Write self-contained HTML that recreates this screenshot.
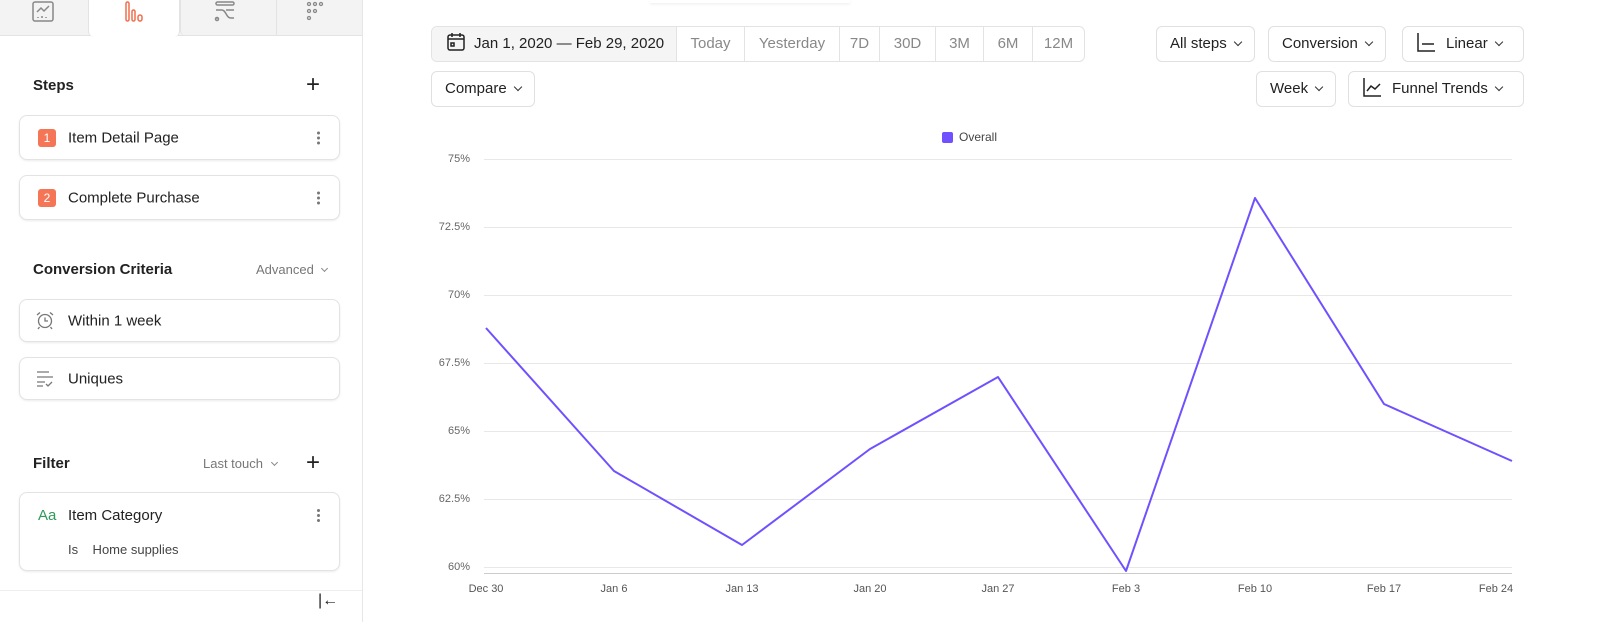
<!DOCTYPE html>
<html><head><meta charset="utf-8"><style>
*{box-sizing:border-box;margin:0;padding:0}
body{width:1600px;height:622px;overflow:hidden;background:#fff;font-family:"Liberation Sans",sans-serif;color:#222;position:relative}
.side{position:absolute;left:0;top:0;width:363px;height:622px;border-right:1px solid #e6e6e6;background:#fff}
.tabs{position:absolute;top:0;left:0;width:362px;height:36px;background:#f3f3f3;border-bottom:1px solid #e3e3e3}
.tab{position:absolute;top:0;height:36px}
.active{left:88px;width:92px;background:#fff;height:37px;border-left:1px solid #e3e3e3;border-right:1px solid #e3e3e3;border-radius:0 0 6px 6px}
.h{position:absolute;font-size:15px;font-weight:bold;color:#222}
.card{position:absolute;left:19px;width:321px;border:1px solid #e3e3e3;border-radius:8px;background:#fff;box-shadow:0 1px 2px rgba(0,0,0,.08);font-size:15px}
.card .t{position:absolute;left:48px;top:50%;transform:translateY(-50%)}
.num{position:absolute;left:18px;top:50%;transform:translateY(-50%);width:18px;height:18px;background:#f57656;color:#fff;font-size:12px;text-align:center;line-height:18px;border-radius:3px}
.dots{position:absolute;right:18px;top:50%;transform:translateY(-50%);width:4px}
.dots i{display:block;width:3px;height:3px;border-radius:50%;background:#777;margin:2px 0}
.plus{position:absolute;font-size:24px;font-weight:300;color:#222;line-height:1}
.gray{position:absolute;font-size:13px;color:#777}
.btn{position:absolute;height:36px;border:1px solid #e0e0e0;border-radius:6px;background:#fff;font-size:15px;line-height:34px;padding:0 13px;color:#222;white-space:nowrap}
.car{display:inline-block;width:6px;height:6px;border-right:1.5px solid #333;border-bottom:1.5px solid #333;transform:rotate(45deg);margin-left:8px;position:relative;top:-3px}
.seg{position:absolute;top:26px;left:431px;height:36px;border:1px solid #e3e3e3;border-radius:6px;display:flex;font-size:15px;overflow:hidden}
.seg div{border-left:1px solid #e3e3e3;color:#888;line-height:34px;text-align:center}
.yl{position:absolute;right:1130px;font-size:11px;color:#666}
.xl{position:absolute;top:583px;font-size:11px;color:#555;transform:translateX(-50%)}
</style></head><body>
<div class="side">
 <div class="tabs">
  <div class="tab active"></div>
  <div class="tab" style="left:180px;width:97px;border-right:1px solid #e3e3e3;border-left:1px solid #e3e3e3;border-radius:0 0 0 6px"></div>
  <svg style="position:absolute;left:32px;top:1px" width="22" height="22" viewBox="0 0 22 22" fill="none" stroke="#888" stroke-width="1.5"><rect x="1" y="1" width="20" height="19" rx="2"/><path d="M5 11l4-4 3 3 5-5"/><path d="M6 16v1M10 15v2M14 16v1" /></svg>
  <svg style="position:absolute;left:124px;top:1px" width="22" height="22" viewBox="0 0 22 22" fill="none" stroke="#f06f4f" stroke-width="1.5"><rect x="2" y="1" width="3" height="19" rx="1.5"/><rect x="8" y="9" width="3" height="11" rx="1.5"/><rect x="14" y="14" width="4" height="6" rx="2"/></svg>
  <svg style="position:absolute;left:214px;top:1px" width="22" height="22" viewBox="0 0 22 22" fill="none" stroke="#888" stroke-width="1.5"><rect x="2" y="1" width="18" height="3" rx="1.5"/><path d="M2 9h6c4 0 4 8 9 8h3M2 17h2M12 9h8"/><circle cx="3" cy="18" r="1.5"/></svg>
  <svg style="position:absolute;left:305px;top:1px" width="22" height="22" viewBox="0 0 22 22" fill="none" stroke="#888" stroke-width="1.3"><circle cx="4" cy="3" r="1.5"/><circle cx="10" cy="3" r="1.5"/><circle cx="16" cy="3" r="1.5"/><circle cx="4" cy="10" r="1.5"/><circle cx="10" cy="10" r="1.5"/><circle cx="4" cy="17" r="1.5"/></svg>
 </div>
 <div class="h" style="left:33px;top:77px">Steps</div>
 <div class="plus" style="left:306px;top:73px">+</div>
 <div class="card" style="top:115px;height:45px"><div class="num">1</div><div class="t">Item Detail Page</div><div class="dots"><i></i><i></i><i></i></div></div>
 <div class="card" style="top:175px;height:45px"><div class="num">2</div><div class="t">Complete Purchase</div><div class="dots"><i></i><i></i><i></i></div></div>
 <div class="h" style="left:33px;top:261px">Conversion Criteria</div>
 <div class="gray" style="left:256px;top:262px">Advanced <span class="car" style="border-color:#888;width:5px;height:5px;margin-left:5px"></span></div>
 <div class="card" style="top:299px;height:43px"><svg style="position:absolute;left:15px;top:11px" width="20" height="20" viewBox="0 0 20 20" fill="none" stroke="#777" stroke-width="1.3"><circle cx="10" cy="10" r="6.5"/><path d="M10 6.5V10h3M2 4l3-2.5M18 4l-3-2.5M4.5 16L3 18M15.5 16L17 18"/></svg><div class="t">Within 1 week</div></div>
 <div class="card" style="top:357px;height:43px"><svg style="position:absolute;left:16px;top:12px" width="20" height="18" viewBox="0 0 20 18" fill="none" stroke="#777" stroke-width="1.3"><path d="M1 2h12M1 7h16M1 12h8M1 16h6M10 14l2 2 4-4"/></svg><div class="t">Uniques</div></div>
 <div class="h" style="left:33px;top:455px">Filter</div>
 <div class="gray" style="left:203px;top:456px">Last touch <span class="car" style="border-color:#888;width:5px;height:5px;margin-left:5px"></span></div>
 <div class="plus" style="left:306px;top:451px">+</div>
 <div class="card" style="top:492px;height:79px"><div style="position:absolute;left:18px;top:14px;color:#2e9a5a;font-size:15px">Aa</div><div style="position:absolute;left:48px;top:14px">Item Category</div><div class="dots" style="top:14px;transform:none"><i></i><i></i><i></i></div><div style="position:absolute;left:48px;top:49px;font-size:13px;color:#444">Is&nbsp;&nbsp;&nbsp;&nbsp;Home supplies</div></div>
 <div style="position:absolute;left:0;top:590px;width:362px;border-top:1px solid #eee"></div>
 <div style="position:absolute;left:318px;top:592px;font-size:16px;color:#222">|&larr;</div>
</div>
<div style="position:absolute;left:650px;top:0;width:200px;height:3px;box-shadow:0 1px 3px rgba(0,0,0,.08)"></div>

<div class="seg">
 <div style="border:none;background:#f5f5f5;color:#222;width:244px;padding-left:14px;text-align:left"><svg style="vertical-align:-4px;margin-right:8px" width="20" height="20" viewBox="0 0 20 20" fill="none" stroke="#222" stroke-width="1.5"><rect x="2" y="3" width="16" height="15" rx="2"/><path d="M2 7h16M6 1v4M14 1v4"/><rect x="5" y="11" width="3" height="3"/></svg>Jan 1, 2020 — Feb 29, 2020</div>
 <div style="width:68px">Today</div><div style="width:95px">Yesterday</div><div style="width:40px">7D</div><div style="width:56px">30D</div><div style="width:48px">3M</div><div style="width:49px">6M</div><div style="width:52px">12M</div>
</div>
<div class="btn" style="left:431px;top:71px">Compare<span class="car"></span></div>
<div class="btn" style="left:1156px;top:26px">All steps<span class="car"></span></div>
<div class="btn" style="left:1268px;top:26px">Conversion<span class="car"></span></div>
<div class="btn" style="left:1402px;top:26px;width:122px"><svg style="vertical-align:-4px;margin-right:10px" width="20" height="20" viewBox="0 0 20 20" fill="none" stroke="#222" stroke-width="1.5"><path d="M2 1v18h17M6 12h12"/></svg>Linear<span class="car"></span></div>
<div class="btn" style="left:1256px;top:71px">Week<span class="car"></span></div>
<div class="btn" style="left:1348px;top:71px;width:176px"><svg style="vertical-align:-4px;margin-right:10px" width="20" height="20" viewBox="0 0 20 20" fill="none" stroke="#222" stroke-width="1.5"><path d="M2 1v18h17M5 14l4-5 4 3 5-5"/></svg>Funnel Trends<span class="car"></span></div>

<div style="position:absolute;left:942px;top:132px;width:11px;height:11px;background:#7050ff;border-radius:2px"></div>
<div style="position:absolute;left:959px;top:130px;font-size:12px;color:#444">Overall</div>

<div class="yl" style="top:153px">75%</div>
<div class="yl" style="top:221px">72.5%</div>
<div class="yl" style="top:289px">70%</div>
<div class="yl" style="top:357px">67.5%</div>
<div class="yl" style="top:425px">65%</div>
<div class="yl" style="top:493px">62.5%</div>
<div class="yl" style="top:561px">60%</div>
<svg style="position:absolute;left:0;top:0" width="1600" height="622">
 <g stroke="#e8e8e8" stroke-width="1">
  <path d="M484 159.5H1512M484 227.5H1512M484 295.5H1512M484 363.5H1512M484 431.5H1512M484 499.5H1512M484 567.5H1512"/>
 </g>
 <path d="M484 573.5H1512" stroke="#ccc"/>
 <polyline fill="none" stroke="#7050ff" stroke-width="2" stroke-linejoin="round" points="486,328 614,471 742,545 870,449 998,377 1126,571 1255,198 1384,404 1512,461"/>
</svg>
<div class="xl" style="left:486px">Dec 30</div>
<div class="xl" style="left:614px">Jan 6</div>
<div class="xl" style="left:742px">Jan 13</div>
<div class="xl" style="left:870px">Jan 20</div>
<div class="xl" style="left:998px">Jan 27</div>
<div class="xl" style="left:1126px">Feb 3</div>
<div class="xl" style="left:1255px">Feb 10</div>
<div class="xl" style="left:1384px">Feb 17</div>
<div class="xl" style="left:1496px">Feb 24</div>
</body></html>
